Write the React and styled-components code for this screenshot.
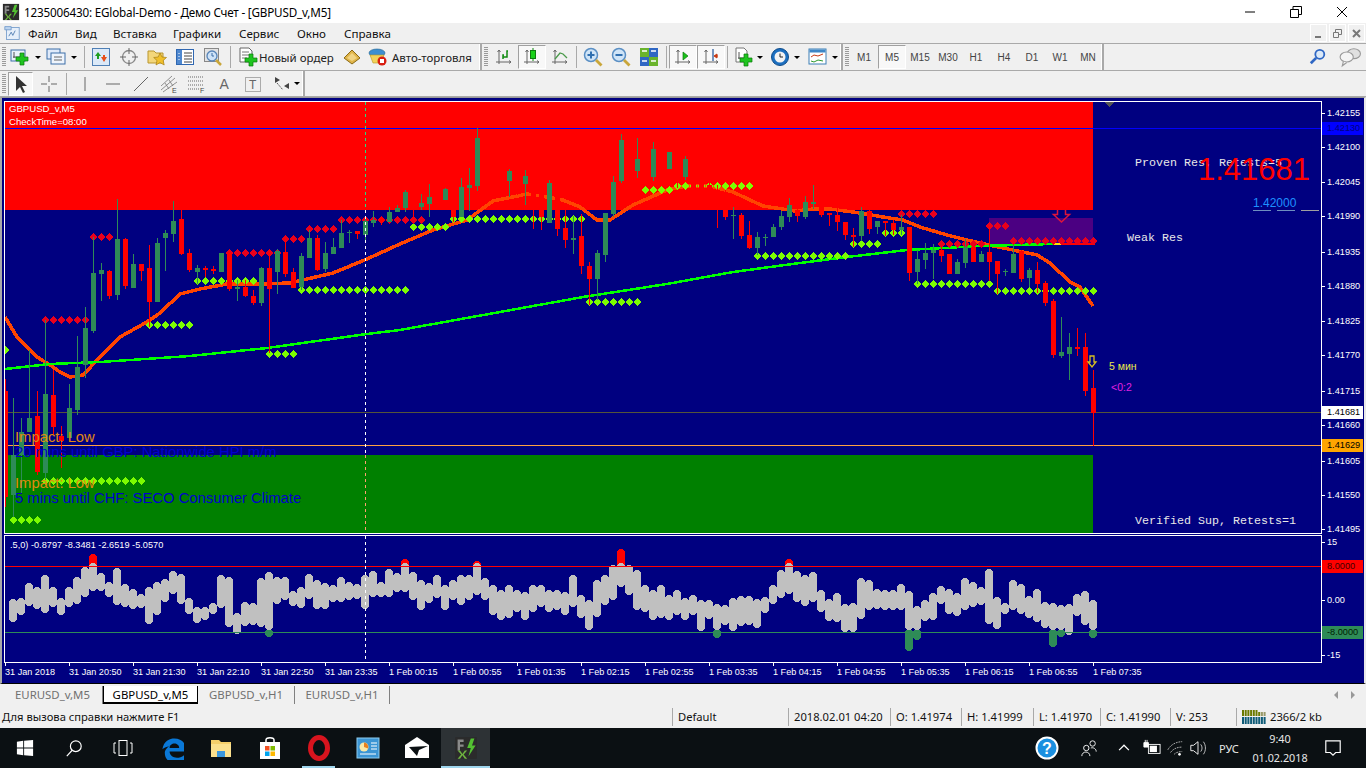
import styled, { createGlobalStyle } from "styled-components";

const Global = createGlobalStyle`
  html, body { margin: 0; padding: 0; background: #000; overflow: hidden; }
  * { box-sizing: border-box; }
`;

const NAVY = "#000080";
const SEA = "#2e8b57";
const RED = "#ff0000";
const UI = `"Liberation Sans", Arial, sans-serif`;
const SEGOE = `"Noto Sans", "Open Sans", sans-serif`;

const Page = styled.div`
  width: 1366px;
  height: 768px;
  display: flex;
  flex-direction: column;
  overflow: hidden;
  font-family: ${SEGOE};
  background: #f0f0f0;
`;

/* title + menu */
const TitleBar = styled.div`
  height: 23px;
  background: #fff;
  display: flex;
  align-items: center;
  padding-left: 2px;
`;
const TitleText = styled.span`
  margin-left: 4px;
  font-size: 11.7px;
  letter-spacing: -0.19px;
  color: #000;
  white-space: nowrap;
`;
const WinControls = styled.div`
  margin-left: auto;
  display: flex;
  padding-right: 1px;
`;
const WinButton = styled.div`
  width: 46px;
  height: 23px;
  display: flex;
  align-items: center;
  justify-content: center;
`;
const MenuBar = styled.div`
  height: 20px;
  background: #f0f0f0;
  display: flex;
  align-items: center;
  padding-left: 4px;
`;
const MenuItems = styled.div`
  margin-left: 8px;
  display: flex;
  font-size: 11.6px;
  color: #111;
`;
const MenuItem = styled.span`
  width: ${(p) => p.$w}px;
  white-space: nowrap;
`;
const MdiButtons = styled.div`
  margin-left: auto;
  display: flex;
  gap: 2px;
  padding-right: 1px;
`;
const MdiButton = styled.div`
  width: 17px;
  height: 18px;
  border: 1px solid #fff;
  display: flex;
  align-items: center;
  justify-content: center;
`;

/* toolbars */
const ToolRow = styled.div`
  height: ${(p) => p.$h}px;
  background: #f0f0f0;
  border-top: ${(p) => (p.$line ? "1px solid #a9a9a9" : "none")};
  border-bottom: 1px solid #a9a9a9;
  display: flex;
  align-items: stretch;
`;
const ToolGroup = styled.div`
  width: ${(p) => p.$w}px;
  display: flex;
  align-items: center;
  border-right: 2px solid #a9a9a9;
  box-shadow: inset -1px 0 0 #fff;
`;
const Grip = styled.div`
  width: 4px;
  height: 20px;
  margin: 0 1px 0 2px;
  flex: none;
  background: repeating-linear-gradient(#9a9a9a 0 1px, #f0f0f0 1px 2px);
`;
const ToolButton = styled.div`
  width: ${(p) => p.$w || 28}px;
  height: 24px;
  margin-left: ${(p) => p.$ml || 0}px;
  flex: none;
  display: flex;
  align-items: center;
  justify-content: ${(p) => (p.$start ? "flex-start" : "center")};
  padding-left: ${(p) => p.$pl || 0}px;
  gap: ${(p) => p.$gap || 0}px;
  font-size: 11.5px;
  color: #222;
  white-space: nowrap;
  ${(p) =>
    p.$active &&
    `background: #f8f8f8;
     border: 1px solid; border-color: #a0a0a0 #fff #fff #a0a0a0;`}
`;
const PeriodButton = styled(ToolButton)`
  font-family: ${UI};
  font-size: 10px;
  color: #444;
`;
const Caret = styled.i`
  width: 0;
  height: 0;
  margin-left: ${(p) => p.$ml ?? 4}px;
  border: 3px solid transparent;
  border-top: 3px solid #000;
  border-bottom: none;
`;
const Sep = styled.div`
  width: 1px;
  height: 22px;
  margin: 0 ${(p) => p.$m ?? 3}px 0 ${(p) => p.$ml ?? 3}px;
  flex: none;
  background: #a9a9a9;
`;
const RightTools = styled.div`
  margin-left: auto;
  display: flex;
  align-items: center;
  gap: 12px;
  padding-right: 5px;
`;

/* chart window */
const ChartWindow = styled.div`
  height: 587px;
  background: ${NAVY};
  border-top: 1px solid #9a9a9a;
  border-left: 2px solid #a9a9a9;
  border-right: 2px solid #e8e8e8;
  border-bottom: 1px solid #000;
  padding: 3px 0 0 2px;
  display: flex;
  flex-direction: column;
  font-family: ${UI};
`;
const Pane = styled.div`
  height: ${(p) => p.$h}px;
  margin-top: ${(p) => p.$mt || 0}px;
  display: flex;
  flex: none;
`;
const Plot = styled.div`
  position: relative;
  width: 1318px;
  height: 100%;
  border: 1px solid #fff;
  svg {
    display: block;
  }
`;
const ValueAxis = styled.div`
  position: relative;
  flex: 1;
`;
const AxisLabel = styled.span`
  position: absolute;
  left: 0;
  top: ${(p) => p.$y - 6}px;
  height: 13px;
  width: 41px;
  padding-left: 5px;
  line-height: 13px;
  font-size: 9.2px;
  color: ${(p) => p.$fg || "#fff"};
  background: ${(p) => p.$bg || "transparent"};
  &::before {
    content: "";
    display: ${(p) => (p.$bg ? "none" : "block")};
    position: absolute;
    left: 0;
    top: 6px;
    width: 3px;
    height: 1px;
    background: #fff;
  }
`;
const TimeAxis = styled.div`
  height: 20px;
  display: flex;
  padding-left: 1px;
`;
const TimeTick = styled.div`
  width: 64px;
  flex: none;
  position: relative;
  padding-top: 3px;
  font-size: 9.1px;
  line-height: 12px;
  color: #fff;
  white-space: nowrap;
  &::before {
    content: "";
    position: absolute;
    left: 0;
    top: 0;
    width: 1px;
    height: 3px;
    background: #fff;
  }
`;

/* texts lying over the plot, positions in page pixels */
const ChartText = styled.span`
  position: absolute;
  left: ${(p) => p.$x - 5}px;
  top: ${(p) => p.$y - 102 - 6}px;
  line-height: 12px;
  font-size: 9.6px;
  color: ${(p) => p.$c || "#fff"};
  white-space: nowrap;
`;
const ZoneText = styled(ChartText)`
  font-family: "Liberation Mono", monospace;
  font-size: 11.67px;
  color: #e8e8e8;
`;
const NewsText = styled(ChartText)`
  font-size: 14.8px;
  line-height: 16px;
  margin-top: -2px;
`;
const BigPrice = styled(ChartText)`
  font-size: 31px;
  line-height: 32px;
  margin-top: -10px;
  color: ${RED};
`;
const SmallTag = styled(ChartText)`
  font-size: 10.5px;
`;
const LevelText = styled(ChartText)`
  font-size: 12px;
  color: #1e90ff;
`;
const LevelMark = styled.i`
  position: absolute;
  left: ${(p) => p.$x - 5}px;
  top: 108px;
  width: 18px;
  height: 1px;
  background: ${(p) => p.$c};
`;
const SubLegend = styled.span`
  position: absolute;
  left: 5px;
  top: 3px;
  line-height: 12px;
  font-size: 9.2px;
  color: #fff;
  white-space: nowrap;
`;

/* tabs + status */
const TabBar = styled.div`
  height: 21px;
  background: #f0f0f0;
  display: flex;
  align-items: flex-start;
  padding: 2px 4px 0 3px;
  font-size: 11.4px;
`;
const Tab = styled.div`
  width: ${(p) => p.$w}px;
  height: 18px;
  line-height: 17px;
  text-align: center;
  white-space: nowrap;
  color: ${(p) => (p.$active ? "#000" : "#707070")};
  background: ${(p) => (p.$active ? "#fff" : "transparent")};
  border-right: 1px solid ${(p) => (p.$active ? "#000" : "#808080")};
  border-bottom: ${(p) => (p.$active ? "2px solid #000" : "none")};
  border-left: ${(p) => (p.$active ? "1px solid #000" : "none")};
`;
const TabNav = styled.div`
  margin-left: auto;
  display: flex;
  gap: 13px;
  padding: 5px 7px 0 0;
`;
const NavArrow = styled.i`
  width: 0;
  height: 0;
  border-top: 4px solid transparent;
  border-bottom: 4px solid transparent;
  border-left: ${(p) => (p.$right ? "4px solid #999" : "none")};
  border-right: ${(p) => (p.$right ? "none" : "4px solid #999")};
`;
const StatusBar = styled.div`
  height: 23px;
  background: #f0f0f0;
  display: flex;
  align-items: center;
  font-size: 11.2px;
  color: #111;
`;
const StatusCell = styled.div`
  width: ${(p) => p.$w}px;
  flex: none;
  height: 18px;
  line-height: 18px;
  padding-left: ${(p) => (p.$first ? 2 : 5)}px;
  border-left: ${(p) => (p.$first ? "none" : "1px solid #a9a9a9")};
  white-space: nowrap;
  display: flex;
  align-items: center;
  gap: 4px;
`;

/* taskbar */
const Taskbar = styled.div`
  height: 40px;
  background: #0b1013;
  display: flex;
  align-items: stretch;
`;
const TaskButton = styled.div`
  position: relative;
  width: 49px;
  display: flex;
  align-items: center;
  justify-content: center;
  background: ${(p) => (p.$active ? "#2d3235" : "transparent")};
  &::after {
    content: "";
    display: ${(p) => (p.$bar ? "block" : "none")};
    position: absolute;
    bottom: 0;
    left: ${(p) => (p.$active ? 0 : 8)}px;
    right: ${(p) => (p.$active ? 0 : 8)}px;
    height: 2px;
    background: #9fd6ee;
  }
`;
const Tray = styled.div`
  margin-left: auto;
  display: flex;
  align-items: stretch;
  color: #e8e8e8;
`;
const TrayItem = styled.div`
  width: ${(p) => p.$w}px;
  display: flex;
  align-items: center;
  justify-content: center;
  font-size: 11px;
`;
const Clock = styled(TrayItem)`
  flex-direction: column;
  line-height: 19px;
  font-size: 10.8px;
`;

/* drawings */
const Ico = ({ s = 20, box = "0 0 20 20", children }) => (
  <svg width={s} height={s} viewBox={box} style={{ flex: "none" }}>
    {children}
  </svg>
);

const Plus = ({ x = 8, y = 8, c = "#1fc41f" }) => (
  <path
    d={`M${x + 4} ${y}h4v4h4v4h-4v4h-4v-4h-4v-4h4z`}
    fill={c}
    stroke="#0a7a0a"
    strokeWidth=".7"
  />
);
const Axes = () => (
  <path d="M5 3v14M2 15h15M3.5 5L5 3l1.5 2M15 13.500l2 1.500-2 1.500" fill="none" stroke="#666" />
);

const FxLogo = ({ s = 18 }) => (
  <Ico s={s}>
    <rect x="1" y="1" width="18" height="18" fill="#2b2b2b" />
    <path d="M3 3h5v2H5v2h3v2H5v3H3z" fill="#8a8a8a" />
    <path d="M3 12l2 0 2 3 2-3 2 0-3 3.500 3 3.500H9l-2-3-2 3H3l3-3.500z" fill="#6eb43f" />
    <path d="M14 2l-3 8h3l-2 7 6-9h-3l2-6z" fill="#53c132" />
  </Ico>
);
const NewChartIco = () => (
  <Ico>
    <rect x="1" y="3" width="14" height="11" fill="#eaf2fb" stroke="#3d6ea8" />
    <path d="M4 5v6M3 10h9" stroke="#555" />
    <Plus x={6} y={6} />
  </Ico>
);
const ProfilesIco = () => (
  <Ico>
    <rect x="1" y="2" width="13" height="10" fill="#dfeafa" stroke="#3d6ea8" />
    <rect x="5" y="6" width="14" height="11" fill="#eef4fc" stroke="#3d6ea8" />
    <path d="M8 10h8M8 13h8" stroke="#666" />
  </Ico>
);
const MarketIco = () => (
  <Ico>
    <rect x="1.500" y="1.500" width="17" height="17" fill="#dbe9f8" stroke="#4f7fb5" />
    <path d="M4 9l3-4 3 4H8v3H6V9z" fill="#1f9e1f" />
    <path d="M10 10h2V8h2v2h2l-3 5z" fill="#e8501a" />
  </Ico>
);
const TargetIco = () => (
  <Ico>
    <circle cx="10" cy="10" r="6.500" fill="none" stroke="#888" strokeWidth="1.300" />
    <path d="M10 1v6M10 13v6M1 10h6M13 10h6" stroke="#666" />
  </Ico>
);
const FolderStarIco = () => (
  <Ico>
    <path d="M1 4h6l2 2h7v10H1z" fill="#f3d67a" stroke="#b9962f" />
    <path d="M13 6l2 4 4.500.500-3.300 3 1 4.500-4.200-2.400L9 18l1-4.500-3.300-3 4.500-.500z" fill="#f0bf2b" stroke="#a67f14" strokeWidth=".7" />
  </Ico>
);
const ListIco = () => (
  <Ico>
    <rect x="1.500" y="2.500" width="17" height="15" fill="#fff" stroke="#2f67b1" />
    <rect x="2" y="3" width="5" height="14" fill="#4f88cf" />
    <path d="M9 6h8M9 9h8M9 12h8M9 15h8" stroke="#444" />
    <path d="M4 6v9" stroke="#fff" strokeDasharray="1 2" />
  </Ico>
);
const TesterIco = () => (
  <Ico>
    <rect x="1.500" y="1.500" width="14" height="13" fill="#e3e3e3" stroke="#888" />
    <circle cx="9" cy="9" r="5" fill="#cfe3f7" stroke="#5784b8" strokeWidth="1.300" />
    <path d="M9 6v3h2" stroke="#3d6ea8" fill="none" />
    <path d="M13 13l5 5" stroke="#c9a63a" strokeWidth="2.500" />
  </Ico>
);
const OrderIco = () => (
  <Ico>
    <path d="M2 1h9l3 3v11H2z" fill="#fff" stroke="#666" />
    <path d="M4 5h7M4 8h7M4 11h5" stroke="#777" />
    <Plus x={7} y={7} />
  </Ico>
);
const BookIco = () => (
  <Ico>
    <path d="M2 11l8-8 8 8-8 6z" fill="#e0b54a" stroke="#8c6a14" />
    <path d="M5 11l5-5 5 5-5 3z" fill="#f1d484" />
  </Ico>
);
const AutoIco = () => (
  <Ico>
    <ellipse cx="9" cy="6" rx="8" ry="4" fill="#3d8fd0" stroke="#20618f" strokeWidth=".6" />
    <path d="M2 8h14l-3 8H5z" fill="#f2d35a" stroke="#b59422" strokeWidth=".6" />
    <circle cx="14" cy="14" r="4.500" fill="#d81e12" />
    <rect x="12" y="12" width="4" height="4" fill="#fff" />
  </Ico>
);
const BarTypeIco = () => (
  <Ico>
    <Axes />
    <path d="M9 12V8h1M13 8V4h1" fill="none" stroke="#0f8a0f" strokeWidth="1.500" />
    <path d="M9 10h4v-2" fill="none" stroke="#0f8a0f" strokeWidth="1.500" />
  </Ico>
);
const CandleTypeIco = () => (
  <Ico>
    <Axes />
    <path d="M11 1v13" stroke="#0f8a0f" />
    <rect x="8.500" y="3.500" width="5" height="8" fill="#19d119" stroke="#0f7a0f" />
  </Ico>
);
const LineTypeIco = () => (
  <Ico>
    <Axes />
    <path d="M5 12l5-6 3 1 4 4" fill="none" stroke="#4a9a4a" strokeWidth="1.300" />
  </Ico>
);
const ZoomIco = ({ minus }) => (
  <Ico>
    <circle cx="8" cy="8" r="6.500" fill="#cfe4f7" stroke="#5a8fc4" strokeWidth="1.500" />
    <path d={minus ? "M4.500 8h7" : "M4.500 8h7M8 4.500v7"} stroke="#2f6fb0" strokeWidth="2" />
    <path d="M13 13l5.500 5.500" stroke="#c9a63a" strokeWidth="2.800" />
  </Ico>
);
const TileIco = () => (
  <Ico>
    <rect x="1" y="1" width="9" height="9" fill="#6ab42c" />
    <rect x="10" y="1" width="9" height="9" fill="#2f67c4" />
    <rect x="1" y="10" width="9" height="9" fill="#2f67c4" />
    <rect x="10" y="10" width="9" height="9" fill="#6ab42c" />
    <path d="M3 4h5M12 4h5M3 14h5M12 14h5" stroke="#fff" strokeWidth="1.500" />
  </Ico>
);
const AutoScrollIco = () => (
  <Ico>
    <Axes />
    <path d="M10 5v8l5-4z" fill="#19c119" stroke="#0f7a0f" strokeWidth=".7" />
  </Ico>
);
const ShiftIco = () => (
  <Ico>
    <Axes />
    <path d="M12 2v12" stroke="#2f5f9f" strokeWidth="1.300" />
    <path d="M17 9h-3M13 9l3-2v4z" fill="#c83a14" stroke="#c83a14" />
  </Ico>
);
const IndicatorsIco = () => (
  <Ico>
    <path d="M3 1h8l3 3v11H3z" fill="#fff" stroke="#777" />
    <path d="M6 5v7M5 11h6" stroke="#555" />
    <Plus x={7} y={7} />
  </Ico>
);
const ClockIco = () => (
  <Ico>
    <circle cx="10" cy="10" r="8.500" fill="#1c6fc0" stroke="#0e4c8a" />
    <circle cx="10" cy="10" r="5.500" fill="#f3f3f3" />
    <path d="M10 6.500V10h3" fill="none" stroke="#222" />
  </Ico>
);
const TemplatesIco = () => (
  <Ico>
    <rect x="1" y="2" width="17" height="15" fill="#fff" stroke="#3d7fb5" />
    <rect x="1.500" y="2.500" width="16" height="3" fill="#3d86c6" />
    <path d="M3 10l3-2 4 1 5-2" fill="none" stroke="#c83a14" />
    <path d="M3 14l3 1 4-2 5 1" fill="none" stroke="#2d9a2d" />
  </Ico>
);
const SearchIco = () => (
  <Ico s={18}>
    <circle cx="12" cy="7" r="5" fill="#dbe9f8" stroke="#2f67c4" strokeWidth="2" />
    <path d="M8 11l-6 6" stroke="#2f67c4" strokeWidth="3" />
  </Ico>
);
const ChatIco = () => (
  <Ico s={22}>
    <ellipse cx="13.500" cy="7" rx="6" ry="4.500" fill="#e0e0e0" stroke="#999" />
    <ellipse cx="7" cy="10" rx="6" ry="4.500" fill="#f4f4f4" stroke="#999" />
    <path d="M4 14l-1 4 4-3" fill="#f4f4f4" stroke="#999" />
  </Ico>
);
const PointerIco = () => (
  <Ico>
    <path d="M5 2v15l4-4 3 6 2-1-3-6h5z" fill="#333" />
  </Ico>
);
const CrossIco = () => (
  <Ico>
    <path d="M10 2v6M10 12v6M2 10h6M12 10h6" stroke="#666" />
  </Ico>
);
const LineIco = ({ d }) => (
  <Ico>
    <path d={d} stroke="#666" />
  </Ico>
);
const ChannelIco = () => (
  <Ico>
    <path d="M2 16L16 4M2 12L13 2M4 18L18 8M6 9l4 6M10 6l4 6" stroke="#777" strokeWidth=".8" />
    <text x="13" y="19" fontSize="7" fontFamily={UI} fill="#444">E</text>
  </Ico>
);
const FiboIco = () => (
  <Ico>
    <path d="M1 3h15M1 7h15M1 11h15M1 15h12" stroke="#666" strokeDasharray="1 1" />
    <text x="13" y="19" fontSize="7" fontFamily={UI} fill="#444">F</text>
  </Ico>
);
const TextAIco = () => (
  <Ico>
    <text x="4.500" y="15" fontSize="14" fontFamily={UI} fill="#666">A</text>
  </Ico>
);
const LabelIco = () => (
  <Ico>
    <rect x="2.500" y="3.500" width="15" height="14" fill="none" stroke="#666" strokeDasharray="1 1" />
    <text x="6" y="15" fontSize="12" fontFamily={UI} fill="#666">T</text>
  </Ico>
);
const ArrowsIco = () => (
  <Ico>
    <path d="M3 3l5 3-5 3zM17 9l-5 3 5 3z" fill="#444" />
    <path d="M5 9l6 7" stroke="#555" strokeDasharray="2 1" />
  </Ico>
);

/* taskbar icons */
const WinLogo = () => (
  <Ico s={18}>
    <path d="M1 3l7-1v7.500H1zM9 2l10-1v8.500H9zM1 10.500h7V18l-7-1zM9 10.500h10V19L9 18z" fill="#fff" />
  </Ico>
);
const CortanaIco = () => (
  <Ico s={18}>
    <circle cx="12" cy="8" r="6" fill="none" stroke="#fff" strokeWidth="1.300" />
    <path d="M8 12.500L2 19" stroke="#fff" strokeWidth="1.300" />
  </Ico>
);
const TaskViewIco = () => (
  <Ico>
    <rect x="6" y="2.500" width="8" height="15" fill="none" stroke="#fff" />
    <path d="M3 5H1v10h2M17 5h2v10h-2" fill="none" stroke="#fff" />
  </Ico>
);
const EdgeIco = () => (
  <Ico s={24}>
    <path
      d="M2 11C3 4 8 2 12 2c6 0 10 4 10 11H8c0 5 7 7 12 3v5c-6 3-16 2-16-7 0-2 2-5 5-6-3 1-6 2-7 3zM8 10h8c0-5-8-5-8 0z"
      fill="#0a78d7"
    />
  </Ico>
);
const ExplorerIco = () => (
  <Ico s={24} box="0 0 24 24">
    <path d="M2 4h8l2 2h10v15H2z" fill="#f5cf6b" />
    <rect x="2" y="8" width="20" height="13" fill="#fbe08e" />
    <rect x="8" y="15" width="8" height="6" fill="#3a96dd" />
  </Ico>
);
const StoreIco = () => (
  <Ico s={24} box="0 0 24 24">
    <path d="M8 7V4c0-3 8-3 8 0v3" fill="none" stroke="#fff" strokeWidth="1.500" />
    <rect x="2" y="6" width="20" height="17" fill="#fff" />
    <rect x="7" y="10" width="4.500" height="4.500" fill="#f25022" />
    <rect x="12.500" y="10" width="4.500" height="4.500" fill="#7fba00" />
    <rect x="7" y="15.500" width="4.500" height="4.500" fill="#00a4ef" />
    <rect x="12.500" y="15.500" width="4.500" height="4.500" fill="#ffb900" />
  </Ico>
);
const OperaIco = () => (
  <Ico s={26} box="0 0 26 26">
    <ellipse cx="13" cy="13" rx="8.500" ry="10.500" fill="none" stroke="#d8141e" strokeWidth="5" />
  </Ico>
);
const ReportIco = () => (
  <Ico s={24} box="0 0 24 24">
    <rect x="1" y="2" width="22" height="20" fill="#3c95d4" stroke="#8dcdf2" />
    <circle cx="8" cy="11" r="4.500" fill="#f8e8a8" />
    <path d="M8 11V6.500a4.500 4.500 0 0 1 4 6z" fill="#e8801e" />
    <path d="M15 7h6M15 10h6M15 13h6M4 18h16" stroke="#fff" />
  </Ico>
);
const MailIco = () => (
  <Ico s={26} box="0 0 26 26">
    <path d="M1 10L13 2l12 8v13H1z" fill="#fff" />
    <path d="M5 12l19-1-9 4-2 6z" fill="#0b1013" />
  </Ico>
);
const HelpIco = () => (
  <svg width="24" height="24" viewBox="0 0 24 24">
    <circle cx="12" cy="12" r="10.500" fill="#1a8fe0" stroke="#fff" strokeWidth="2" />
    <text x="12" y="17.500" textAnchor="middle" fontSize="16" fontWeight="700" fontFamily={UI} fill="#fff">?</text>
  </svg>
);
const PeopleIco = () => (
  <Ico s={18}>
    <circle cx="7" cy="10" r="3" fill="none" stroke="#fff" />
    <path d="M2 19c0-6 9-6 9 0" fill="none" stroke="#fff" />
    <circle cx="14" cy="5" r="3" fill="none" stroke="#fff" />
    <path d="M12 10c3-1 6 1 6 4" fill="none" stroke="#fff" />
  </Ico>
);
const ChevronIco = () => (
  <Ico s={14}>
    <path d="M3 13l7-7 7 7" fill="none" stroke="#fff" strokeWidth="1.800" />
  </Ico>
);
const PowerIco = () => (
  <Ico s={18}>
    <rect x="6" y="6" width="13" height="10" fill="none" stroke="#fff" />
    <rect x="7.500" y="7.500" width="8" height="7" fill="#fff" />
    <path d="M1 4h5v5H1zM2.500 1v3M4.500 1v3" fill="#fff" stroke="#fff" />
  </Ico>
);
const WifiIco = () => (
  <Ico s={18}>
    <path d="M2 12c4-7 11-9 16-9M5 15c3-4 7-6 13-6M9 17c2-2 5-3 9-3" fill="none" stroke="#bbb" strokeDasharray="2 1" />
    <circle cx="15" cy="17" r="1.500" fill="#fff" />
  </Ico>
);
const SpeakerIco = () => (
  <Ico s={18}>
    <path d="M2 7h3l5-4v14l-5-4H2z" fill="none" stroke="#fff" />
    <path d="M13 6c2 2 2 6 0 8M16 3c3 4 3 10 0 14" fill="none" stroke="#ccc" />
  </Ico>
);
const NotifyIco = () => (
  <Ico s={18}>
    <path d="M2 2h16v13h-5l-3 3-3-3H2z" fill="none" stroke="#fff" strokeWidth="1.300" />
  </Ico>
);
const BarsIco = () => (
  <svg width="24" height="14" viewBox="0 0 24 14">
    {Array.from({ length: 9 }, (_, i) => (
      <g key={i}>
        <rect x={i * 2.700} y={i > 5 ? 2 : 0} width="2" height={i > 5 ? 4 : 6} fill={i > 6 ? "#9a9a6a" : "#6c7a00"} />
        <rect x={i * 2.700} y="7" width="2" height="7" fill="#0f5c78" />
      </g>
    ))}
  </svg>
);

/* chart data, all in page pixels */
const g = SEA;
const r = RED;
const candles = [
  [5, 379, 391, 497, 507, r], [13, 398, 455, 495, 517, g], [21, 418, 432, 455, 493, g], [29, 350, 418, 432, 432, g],
  [37, 391, 416, 472, 475, r], [45, 320, 394, 473, 480, g], [53, 370, 395, 427, 435, r], [61, 426, 436, 441, 468, r],
  [69, 384, 408, 438, 438, g], [77, 336, 367, 410, 415, g], [85, 307, 328, 365, 378, g], [93, 237, 273, 331, 333, g],
  [101, 263, 270, 274, 301, g], [109, 270, 271, 296, 299, r], [117, 199, 239, 295, 300, g], [125, 238, 239, 286, 289, r],
  [133, 254, 264, 288, 288, g], [141, 264, 264, 271, 281, r], [149, 245, 268, 302, 327, r], [157, 238, 243, 302, 302, g],
  [165, 230, 233, 238, 271, g], [173, 201, 221, 234, 242, g], [181, 210, 219, 254, 255, r], [189, 249, 253, 270, 272, r],
  [197, 265, 268, 272, 284, g], [205, 266, 268, 270, 277, r], [213, 266, 269, 271, 274, r], [221, 253, 253, 272, 272, g],
  [229, 250, 253, 289, 291, r], [237, 280, 287, 289, 301, g], [245, 280, 287, 296, 297, r], [253, 290, 296, 303, 305, r],
  [261, 267, 268, 303, 306, g], [269, 250, 268, 289, 353, r], [277, 249, 251, 272, 294, g], [285, 237, 252, 274, 277, r],
  [293, 268, 272, 288, 288, r], [301, 253, 256, 287, 290, g], [309, 230, 238, 258, 258, g], [317, 235, 238, 270, 271, r],
  [325, 242, 253, 269, 272, g], [333, 238, 247, 254, 254, g], [341, 220, 233, 248, 248, g], [349, 230, 232, 233, 243, g],
  [357, 231, 231, 234, 239, r], [365, 219, 221, 235, 243, g], [373, 211, 220, 223, 227, g], [381, 217, 218, 222, 225, r],
  [389, 207, 212, 222, 222, g], [397, 205, 208, 212, 212, g], [405, 190, 192, 208, 212, g], [413, 195, 198, 209, 220, r],
  [421, 194, 203, 207, 210, g], [429, 184, 197, 204, 217, g], [437, 188, 190, 200, 206, r], [445, 188, 189, 200, 200, g],
  [453, 175, 180, 217, 222, r], [461, 178, 187, 217, 217, g], [469, 168, 185, 188, 211, g], [477, 128, 138, 186, 191, g],
  [485, 165, 170, 182, 190, r], [493, 160, 165, 180, 185, r], [501, 165, 172, 185, 190, r], [509, 169, 171, 181, 197, g],
  [517, 170, 175, 190, 195, r], [525, 170, 176, 184, 205, g], [533, 180, 187, 197, 229, r], [541, 178, 185, 217, 230, r],
  [549, 180, 183, 223, 223, g], [557, 190, 195, 229, 236, r], [565, 210, 228, 240, 248, r], [573, 216, 238, 240, 254, g],
  [581, 214, 236, 266, 274, r], [589, 262, 266, 279, 305, r], [597, 250, 253, 279, 300, g], [605, 213, 213, 255, 262, g],
  [613, 176, 182, 214, 217, g], [621, 134, 140, 181, 183, g], [629, 165, 170, 190, 198, r], [637, 138, 159, 171, 178, g],
  [645, 145, 150, 175, 180, r], [653, 142, 149, 177, 181, g], [661, 146, 150, 170, 180, r], [669, 152, 152, 169, 169, g],
  [677, 160, 165, 180, 188, r], [685, 156, 159, 177, 180, g], [693, 170, 178, 195, 200, r], [701, 170, 175, 195, 200, r],
  [709, 180, 185, 200, 205, r], [717, 185, 190, 209, 228, r], [725, 190, 195, 217, 220, r], [733, 207, 215, 216, 239, g],
  [741, 213, 215, 236, 239, r], [749, 221, 235, 248, 249, r], [757, 232, 237, 248, 255, g], [765, 234, 237, 238, 246, g],
  [773, 224, 227, 237, 237, g], [781, 211, 216, 227, 230, g], [789, 198, 205, 217, 222, g], [797, 205, 210, 216, 222, r],
  [805, 196, 202, 217, 219, g], [813, 185, 202, 204, 209, g], [821, 205, 207, 215, 217, r], [829, 213, 213, 215, 226, r],
  [837, 208, 215, 222, 231, r], [845, 222, 222, 235, 240, r], [853, 228, 235, 237, 247, r], [861, 207, 211, 236, 241, g],
  [869, 210, 211, 229, 234, r], [877, 221, 221, 227, 234, g], [885, 221, 221, 223, 236, r], [893, 220, 223, 230, 235, r],
  [901, 215, 227, 230, 235, g], [909, 227, 227, 273, 281, r], [917, 250, 259, 272, 284, g], [925, 243, 253, 260, 269, g],
  [933, 244, 250, 253, 279, g], [941, 246, 250, 256, 262, r], [949, 254, 254, 274, 274, r], [957, 259, 262, 274, 274, g],
  [965, 239, 247, 263, 268, g], [973, 245, 247, 262, 262, r], [981, 251, 254, 262, 262, g], [989, 225, 252, 262, 281, r],
  [997, 261, 261, 274, 294, r], [1005, 269, 271, 272, 276, g], [1013, 245, 254, 273, 273, g], [1021, 250, 251, 279, 282, r],
  [1029, 268, 270, 278, 287, g], [1037, 262, 270, 284, 293, r], [1045, 281, 283, 303, 306, r], [1053, 299, 301, 355, 358, r],
  [1061, 317, 352, 356, 358, g], [1069, 333, 347, 354, 380, g], [1077, 328, 347, 349, 356, r], [1085, 333, 347, 391, 396, r],
  [1093, 370, 388, 413, 446, r],
];

const orangeMa = "5,317 17,337 37,357 50,365 60,372 70,377 83,375 100,357 120,337 147,322 160,313 180,294 200,289 227,284 260,284 290,283 333,273 367,259 400,244 433,230 467,220 493,201 527,194 547,197 563,200 580,207 597,220 610,220 633,205 667,190 687,186 710,186 733,192 763,206 795,211 813,209 830,209 860,213 883,217 903,220 920,227 947,235 967,240 993,246 1013,250 1037,255 1050,263 1070,282 1080,287 1093,306";
const greenMa = "5,369 50,364 100,362 190,356 267,348 367,334 400,330 500,312 583,297 667,284 733,272 800,263 847,257 907,250 980,246 1053,244";

// [y, first x, last x]
const greenDots = [
  [520, 13, 37], [481, 45, 141], [325, 149, 189], [281, 197, 253], [290, 301, 405], [354, 269, 293], [350, 5, 5],
  [227, 413, 445], [219, 453, 581], [302, 589, 637], [190, 645, 669], [186, 677, 749], [256, 757, 845], [244, 853, 877],
  [233, 885, 901], [284, 917, 989], [291, 997, 1093],
];
const redDots = [
  [237, 93, 109], [320, 45, 85], [253, 229, 277], [239, 285, 301], [229, 309, 333], [220, 341, 421], [214, 901, 933],
  [244, 941, 981], [226, 989, 1005], [241, 1013, 1093],
];

const subBars = [
  [13, 599, 622], [21, 598, 615], [29, 583, 606], [37, 587, 609], [45, 575, 613], [53, 587, 607], [61, 598, 615], [69, 587, 607],
  [77, 577, 604], [85, 567, 597], [93, 555, 591], [101, 573, 591], [109, 582, 597], [117, 568, 605], [125, 584, 607], [133, 589, 609],
  [141, 594, 608], [149, 587, 624], [157, 582, 615], [165, 579, 602], [173, 571, 594], [181, 574, 604], [189, 598, 614], [197, 607, 623],
  [205, 607, 620], [213, 603, 614], [221, 575, 608], [229, 577, 627], [237, 613, 634], [245, 602, 626], [253, 603, 625], [261, 578, 627],
  [269, 572, 637], [277, 577, 604], [285, 577, 600], [293, 591, 606], [301, 587, 608], [309, 574, 599], [317, 580, 609], [325, 583, 609],
  [333, 585, 602], [341, 577, 602], [349, 582, 600], [357, 584, 599], [365, 575, 609], [373, 571, 597], [381, 582, 597], [389, 569, 597],
  [397, 573, 592], [405, 560, 592], [413, 572, 600], [421, 580, 610], [429, 583, 603], [437, 575, 598], [445, 585, 610], [453, 580, 600],
  [461, 575, 605], [469, 575, 600], [477, 562, 595], [485, 578, 600], [493, 585, 615], [501, 590, 620], [509, 585, 618], [517, 590, 612],
  [525, 592, 620], [533, 585, 612], [541, 585, 607], [549, 590, 612], [557, 590, 610], [565, 592, 615], [573, 575, 607], [581, 595, 618],
  [589, 600, 630], [597, 580, 617], [605, 575, 605], [613, 565, 600], [621, 550, 587], [629, 565, 595], [637, 570, 610], [645, 585, 612],
  [653, 590, 620], [661, 585, 618], [669, 595, 620], [677, 590, 615], [685, 598, 620], [693, 595, 615], [701, 600, 631], [709, 600, 619],
  [717, 604, 638], [725, 605, 625], [733, 598, 631], [741, 596, 626], [749, 596, 625], [757, 599, 628], [765, 597, 613], [773, 585, 604],
  [781, 570, 598], [789, 560, 594], [797, 571, 602], [805, 575, 606], [813, 572, 602], [821, 590, 612], [829, 599, 621], [837, 593, 622],
  [845, 604, 632], [853, 603, 632], [861, 578, 619], [869, 580, 610], [877, 589, 609], [885, 590, 610], [893, 590, 610], [901, 584, 610],
  [909, 591, 651], [917, 606, 640], [925, 600, 621], [933, 593, 620], [941, 586, 604], [949, 589, 614], [957, 593, 616], [965, 578, 610],
  [973, 582, 607], [981, 587, 605], [989, 569, 624], [997, 597, 629], [1005, 603, 614], [1013, 580, 610], [1021, 584, 614], [1029, 596, 618],
  [1037, 589, 622], [1045, 602, 628], [1053, 603, 647], [1061, 605, 637], [1069, 604, 635], [1077, 594, 616], [1085, 591, 625], [1093, 600, 638],
];

const mainAxis = [
  [113, "1.42155"], [147, "1.42100"], [182, "1.42045"], [216, "1.41990"], [252, "1.41935"], [286, "1.41880"], [321, "1.41825"],
  [355, "1.41770"], [391, "1.41715"], [425, "1.41660"], [461, "1.41605"], [495, "1.41550"], [529, "1.41495"],
];
const mainTags = [
  [128, "1.42130", "#0000ff", "#000080"],
  [412, "1.41681", "#ffffff", "#000"],
  [445, "1.41629", "#ffa500", "#000"],
];
const timeLabels = [
  "31 Jan 2018", "31 Jan 20:50", "31 Jan 21:30", "31 Jan 22:10", "31 Jan 22:50", "31 Jan 23:35", "1 Feb 00:15", "1 Feb 00:55", "1 Feb 01:35",
  "1 Feb 02:15", "1 Feb 02:55", "1 Feb 03:35", "1 Feb 04:15", "1 Feb 04:55", "1 Feb 05:35", "1 Feb 06:15", "1 Feb 06:55", "1 Feb 07:35",
];
const menus = [["Файл", 47], ["Вид", 38], ["Вставка", 60], ["Графики", 66], ["Сервис", 58], ["Окно", 47], ["Справка", 60]];
const periods = ["M1", "M5", "M15", "M30", "H1", "H4", "D1", "W1", "MN"];

const Dots = ({ rows, fill }) =>
  rows.map(([y, from, to]) => {
    const items = [];
    for (let x = from; x <= to; x += 8) items.push(`M${x + 0.5} ${y - 4}l4 4-4 4-4-4z`);
    return <path key={`${y}-${from}`} d={items.join("")} fill={fill} />;
  });

function MainPlot() {
  return (
    <svg width="1316" height="431" viewBox="5 102 1316 431" shapeRendering="crispEdges">
      <rect x="5" y="102" width="1088" height="108" fill={RED} />
      <rect x="5" y="455" width="1088" height="78" fill="#008000" />
      <rect x="989" y="218" width="104" height="26" fill="#4b0082" />
      <path d="M5 128.500H1321" stroke="#0000ff" />
      <path d="M5 412.500H1321" stroke="#55553a" />
      <path d="M5 445.500H1321" stroke="#ffa040" />
      <path d="M1105 102h9l-4.500 5z" fill="#555" />
      <polyline points={orangeMa} fill="none" stroke="#ff4500" strokeWidth="3.500" />
      <polyline points={greenMa} fill="none" stroke="#00ff00" strokeWidth="2.500" />
      <path d="M1053 244h9" stroke="#ffe000" strokeWidth="2" />
      <path d="M1062 244h33" stroke="#ff0000" strokeWidth="2" />
      <Dots rows={greenDots} fill="#7cfc00" />
      <Dots rows={redDots} fill="#e8001c" />
      {candles.map(([x, hi, top, bot, lo, c]) => (
        <g key={x} fill={c}>
          <rect x={x} y={hi} width="1" height={lo - hi} />
          <rect x={x - 2} y={top} width="5" height={Math.max(bot - top, 1)} />
        </g>
      ))}
      <path d="M1057.500 210v4.500h-4l8 7.500 8-7.500h-4v-4.500" fill="none" stroke="#dc143c" strokeWidth="1.500" shapeRendering="auto" />
      <path d="M1090 356v6h-2l4 5 4-5h-2v-6z" fill="none" stroke="#d8c020" strokeWidth="1.300" shapeRendering="auto" />
      <path d="M365.500 102V210" stroke="#20e080" strokeDasharray="3 3" />
      <path d="M365.500 210V455" stroke="#fff" strokeDasharray="3 3" />
      <path d="M365.500 455V533" stroke="#ffa070" strokeDasharray="3 3" />
    </svg>
  );
}

function SubPlot() {
  return (
    <svg width="1316" height="126" viewBox="5 536 1316 126">
      <g strokeWidth="8" strokeLinecap="round" shapeRendering="crispEdges">
        {subBars.map(([x, top, bot]) => {
          const hot = top < 563;
          const deep = bot > 635;
          return (
            <g key={x}>
              {hot && <path d={`M${x} ${top + 3}V566`} stroke={RED} />}
              {deep && <path d={`M${x} 633V${bot - 4}`} stroke={SEA} />}
              <path d={`M${x} ${(hot ? 563 : top) + 4}V${(deep ? 630 : bot) - 4}`} stroke="#c0c0c0" />
            </g>
          );
        })}
      </g>
      <path d="M5 566.500H1321" stroke={RED} />
      <path d="M5 632.500H1321" stroke={SEA} />
      <path d="M365.500 536V662" stroke="#fff" strokeDasharray="3 3" />
    </svg>
  );
}

export default function App() {
  return (
    <Page>
      <Global />
      <TitleBar>
        <FxLogo />
        <TitleText>1235006430: EGlobal-Demo - Демо Счет - [GBPUSD_v,M5]</TitleText>
        <WinControls>
          <WinButton>
            <Ico s={12} box="0 0 12 12"><path d="M1 6h10" stroke="#000" /></Ico>
          </WinButton>
          <WinButton>
            <Ico s={12} box="0 0 12 12"><path d="M.5 3.500h8v8h-8zM3 3.500v-3h8.500v8H8.500" fill="none" stroke="#000" /></Ico>
          </WinButton>
          <WinButton>
            <Ico s={12} box="0 0 12 12"><path d="M1 1l10 10M11 1L1 11" stroke="#000" /></Ico>
          </WinButton>
        </WinControls>
      </TitleBar>

      <MenuBar>
        <Ico s={16}>
          <rect x="3" y="3" width="16" height="15" fill="#e6effa" stroke="#6c96c8" />
          <path d="M1 2h8v4H1z" fill="#bcd4ef" stroke="#6c96c8" />
          <path d="M6 14l3-5 2 4 3-6" fill="none" stroke="#3d6ea8" />
        </Ico>
        <MenuItems>
          {menus.map(([name, w]) => (
            <MenuItem key={name} $w={w}>{name}</MenuItem>
          ))}
        </MenuItems>
        <MdiButtons>
          <MdiButton><Ico s={11} box="0 0 11 11"><path d="M2 9h6" stroke="#777" strokeWidth="2" /></Ico></MdiButton>
          <MdiButton><Ico s={11} box="0 0 11 11"><path d="M1.500 4.500h5v5h-5zM3.500 4V1.500h6v5H7" fill="none" stroke="#777" /></Ico></MdiButton>
          <MdiButton><Ico s={11} box="0 0 11 11"><path d="M2 2l7 7M9 2L2 9" stroke="#777" strokeWidth="2" /></Ico></MdiButton>
        </MdiButtons>
      </MenuBar>

      <ToolRow $h={28} $line>
        <ToolGroup $w={482}>
          <Grip />
          <ToolButton $w={36} $start $pl={3}><NewChartIco /><Caret $ml={5} /></ToolButton>
          <ToolButton $w={37} $start $pl={3}><ProfilesIco /><Caret $ml={5} /></ToolButton>
          <Sep $ml={4} $m={2} />
          <ToolButton><MarketIco /></ToolButton>
          <ToolButton><TargetIco /></ToolButton>
          <ToolButton><FolderStarIco /></ToolButton>
          <ToolButton><ListIco /></ToolButton>
          <ToolButton><TesterIco /></ToolButton>
          <Sep $ml={3} $m={7} />
          <ToolButton $w={101} $start $gap={1}><OrderIco />Новый ордер</ToolButton>
          <ToolButton $w={26}><BookIco /></ToolButton>
          <ToolButton $w={111} $start $pl={3} $gap={4}><AutoIco />Авто-торговля</ToolButton>
        </ToolGroup>
        <ToolGroup $w={361}>
          <Grip />
          <ToolButton $ml={1}><BarTypeIco /></ToolButton>
          <ToolButton $active><CandleTypeIco /></ToolButton>
          <ToolButton><LineTypeIco /></ToolButton>
          <Sep $ml={2} $m={2} />
          <ToolButton><ZoomIco /></ToolButton>
          <ToolButton><ZoomIco minus /></ToolButton>
          <ToolButton><TileIco /></ToolButton>
          <Sep $ml={3} $m={2} />
          <ToolButton $active><AutoScrollIco /></ToolButton>
          <ToolButton $active><ShiftIco /></ToolButton>
          <Sep $ml={2} $m={2} />
          <ToolButton $w={37} $start $pl={3}><IndicatorsIco /><Caret /></ToolButton>
          <ToolButton $w={38} $start $pl={3}><ClockIco /><Caret /></ToolButton>
          <ToolButton $w={36} $start $pl={3}><TemplatesIco /><Caret /></ToolButton>
        </ToolGroup>
        <ToolGroup $w={261}>
          <Grip />
          {periods.map((p) => (
            <PeriodButton key={p} $active={p === "M5"}>{p}</PeriodButton>
          ))}
        </ToolGroup>
        <RightTools>
          <SearchIco />
          <ChatIco />
        </RightTools>
      </ToolRow>

      <ToolRow $h={26}>
        <ToolGroup $w={305}>
          <Grip />
          <ToolButton $active $w={25} $ml={1}><PointerIco /></ToolButton>
          <ToolButton $ml={2}><CrossIco /></ToolButton>
          <Sep $ml={3} $m={4} />
          <ToolButton><LineIco d="M10 3v14" /></ToolButton>
          <ToolButton><LineIco d="M3 10h14" /></ToolButton>
          <ToolButton><LineIco d="M3 17L17 3" /></ToolButton>
          <ToolButton><ChannelIco /></ToolButton>
          <ToolButton><FiboIco /></ToolButton>
          <ToolButton><TextAIco /></ToolButton>
          <ToolButton><LabelIco /></ToolButton>
          <ToolButton $w={34} $start $pl={5}><ArrowsIco /><Caret $ml={2} /></ToolButton>
        </ToolGroup>
      </ToolRow>

      <ChartWindow>
        <Pane $h={433}>
          <Plot>
            <MainPlot />
            <ChartText $x={9} $y={109}>GBPUSD_v,M5</ChartText>
            <ChartText $x={9} $y={122}>CheckTime=08:00</ChartText>
            <NewsText $x={15} $y={437} $c="#e08a10">Impact: Low</NewsText>
            <NewsText $x={15} $y={452} $c="#0000cd">20 mins until GBP: Nationwide HPI m/m</NewsText>
            <NewsText $x={15} $y={483} $c="#e08a10">Impact: Low</NewsText>
            <NewsText $x={15} $y={498} $c="#0000cd">5 mins until CHF: SECO Consumer Climate</NewsText>
            <ZoneText $x={1135} $y={163}>Proven Res, Retests=5</ZoneText>
            <BigPrice $x={1198} $y={170}>1.41681</BigPrice>
            <LevelText $x={1253} $y={203}>1.42000</LevelText>
            <LevelMark $x={1253} $c="#6f8fc0" />
            <LevelMark $x={1277} $c="#6f8fc0" />
            <LevelMark $x={1301} $c="#a0a0a0" />
            <ZoneText $x={1127} $y={238}>Weak Res</ZoneText>
            <SmallTag $x={1109} $y={366} $c="#e8e84a">5 мин</SmallTag>
            <SmallTag $x={1111} $y={387} $c="#e020e0">&lt;0:2</SmallTag>
            <ZoneText $x={1135} $y={521}>Verified Sup, Retests=1</ZoneText>
          </Plot>
          <ValueAxis>
            {mainAxis.map(([y, t]) => (
              <AxisLabel key={t} $y={y - 101}>{t}</AxisLabel>
            ))}
            {mainTags.map(([y, t, bg, fg]) => (
              <AxisLabel key={t} $y={y - 101} $bg={bg} $fg={fg}>{t}</AxisLabel>
            ))}
          </ValueAxis>
        </Pane>
        <Pane $h={128} $mt={1}>
          <Plot>
            <SubPlot />
            <SubLegend>.5,0) -0.8797 -8.3481 -2.6519 -5.0570</SubLegend>
          </Plot>
          <ValueAxis>
            <AxisLabel $y={7}>15</AxisLabel>
            <AxisLabel $y={31} $bg={RED} $fg="#400000">8.0000</AxisLabel>
            <AxisLabel $y={65}>0.00</AxisLabel>
            <AxisLabel $y={97} $bg={SEA} $fg="#002000">-8.0000</AxisLabel>
            <AxisLabel $y={120}>-15</AxisLabel>
          </ValueAxis>
        </Pane>
        <TimeAxis>
          {timeLabels.map((t) => (
            <TimeTick key={t}>{t}</TimeTick>
          ))}
        </TimeAxis>
      </ChartWindow>

      <TabBar>
        <Tab $w={100}>EURUSD_v,M5</Tab>
        <Tab $w={95} $active>GBPUSD_v,M5</Tab>
        <Tab $w={97}>GBPUSD_v,H1</Tab>
        <Tab $w={95}>EURUSD_v,H1</Tab>
        <TabNav>
          <NavArrow />
          <NavArrow $right />
        </TabNav>
      </TabBar>

      <StatusBar>
        <StatusCell $w={672} $first>Для вызова справки нажмите F1</StatusCell>
        <StatusCell $w={116}>Default</StatusCell>
        <StatusCell $w={102}>2018.02.01 04:20</StatusCell>
        <StatusCell $w={71}>O: 1.41974</StatusCell>
        <StatusCell $w={72}>H: 1.41999</StatusCell>
        <StatusCell $w={67}>L: 1.41970</StatusCell>
        <StatusCell $w={70}>C: 1.41990</StatusCell>
        <StatusCell $w={66}>V: 253</StatusCell>
        <StatusCell $w={130}><BarsIco />2366/2 kb</StatusCell>
      </StatusBar>

      <Taskbar>
        <TaskButton><WinLogo /></TaskButton>
        <TaskButton><CortanaIco /></TaskButton>
        <TaskButton><TaskViewIco /></TaskButton>
        <TaskButton><EdgeIco /></TaskButton>
        <TaskButton><ExplorerIco /></TaskButton>
        <TaskButton><StoreIco /></TaskButton>
        <TaskButton $bar><OperaIco /></TaskButton>
        <TaskButton><ReportIco /></TaskButton>
        <TaskButton><MailIco /></TaskButton>
        <TaskButton $active $bar><FxLogo s={24} /></TaskButton>
        <Tray>
          <TrayItem $w={48}><HelpIco /></TrayItem>
          <TrayItem $w={36}><PeopleIco /></TrayItem>
          <TrayItem $w={34}><ChevronIco /></TrayItem>
          <TrayItem $w={22}><PowerIco /></TrayItem>
          <TrayItem $w={24}><WifiIco /></TrayItem>
          <TrayItem $w={21}><SpeakerIco /></TrayItem>
          <TrayItem $w={42}>РУС</TrayItem>
          <Clock $w={60}><span>9:40</span><span>01.02.2018</span></Clock>
          <TrayItem $w={46}><NotifyIco /></TrayItem>
          <TrayItem $w={10} />
        </Tray>
      </Taskbar>
    </Page>
  );
}
